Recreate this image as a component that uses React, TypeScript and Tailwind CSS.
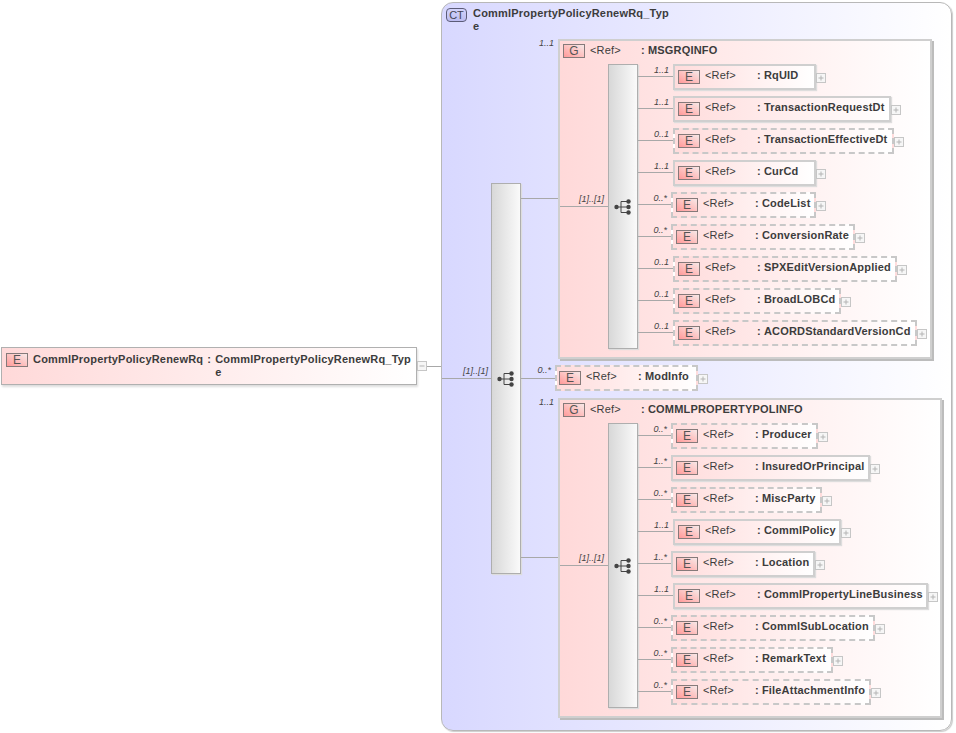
import React from "react";

type Child = {
  label: string;
  card: string;
  width: string;
  dashed?: boolean;
};

const msgRqInfo: Child[] = [
  { label: "RqUID", card: "1..1", width: "w-[143px]" },
  { label: "TransactionRequestDt", card: "1..1", width: "w-[218px]" },
  { label: "TransactionEffectiveDt", card: "0..1", width: "w-[221px]", dashed: true },
  { label: "CurCd", card: "1..1", width: "w-[143px]" },
  { label: "CodeList", card: "0..*", width: "w-[145px]", dashed: true },
  { label: "ConversionRate", card: "0..*", width: "w-[184px]", dashed: true },
  { label: "SPXEditVersionApplied", card: "0..1", width: "w-[224px]", dashed: true },
  { label: "BroadLOBCd", card: "0..1", width: "w-[168px]", dashed: true },
  { label: "ACORDStandardVersionCd", card: "0..1", width: "w-[244px]", dashed: true },
];

const commlPropertyPolInfo: Child[] = [
  { label: "Producer", card: "0..*", width: "w-[147px]", dashed: true },
  { label: "InsuredOrPrincipal", card: "1..*", width: "w-[199px]" },
  { label: "MiscParty", card: "0..*", width: "w-[151px]", dashed: true },
  { label: "CommlPolicy", card: "1..1", width: "w-[168px]" },
  { label: "Location", card: "1..*", width: "w-[144px]" },
  { label: "CommlPropertyLineBusiness", card: "1..1", width: "w-[255px]" },
  { label: "CommlSubLocation", card: "0..*", width: "w-[204px]", dashed: true },
  { label: "RemarkText", card: "0..*", width: "w-[162px]", dashed: true },
  { label: "FileAttachmentInfo", card: "0..*", width: "w-[200px]", dashed: true },
];

const Badge = ({ text, className = "" }: { text: string; className?: string }) => (
  <span
    className={`flex h-[14px] w-[22px] shrink-0 items-center justify-center border border-[#857a7a] bg-linear-to-tr from-[#ff9a9a] to-[#f6e8e8] text-[12px] leading-none font-normal tracking-normal text-[#555] ${className}`}
  >
    {text}
  </span>
);

// expand / collapse toggle at the right of a node
const Toggle = ({ open = false, className = "" }: { open?: boolean; className?: string }) => (
  <svg className={`shrink-0 ${className}`} width="10" height="10" viewBox="0 0 10 10">
    <rect x="0.5" y="0.5" width="9" height="9" fill="#f6f6f6" stroke="#c6c6c6" />
    <path d={open ? "M2.5 5h5" : "M2.5 5h5M5 2.5v5"} stroke="#b4b4b4" fill="none" />
  </svg>
);

// line going into a node, with the cardinality sitting above it
const Connector = ({
  card,
  className,
  labelClass = "top-[2px] right-[4px]",
}: {
  card?: string;
  className: string;
  labelClass?: string;
}) => (
  <div className={`relative flex shrink-0 items-center ${className}`}>
    <div className="h-px w-full bg-[#a8a8a8]" />
    {card && (
      <span className={`absolute text-[9px] leading-none whitespace-nowrap text-[#444] italic ${labelClass}`}>
        {card}
      </span>
    )}
  </div>
);

// grey sequence bar with its symbol in the middle
const SequenceBar = ({ className }: { className: string }) => (
  <div
    className={`flex w-[30px] shrink-0 items-center justify-center border border-[#aeaeae] bg-linear-to-r from-[#d8d8d8] to-[#fafafa] shadow-[1px_1px_1px_#ddd] ${className}`}
  >
    <svg width="18" height="18" viewBox="0 0 18 18" fill="#444">
      <path d="M2 9h5M7 3.5h8M7 9h8M7 14.5h8M7 3.5v11" fill="none" stroke="#444" />
      <circle cx="2.5" cy="9" r="2.2" />
      <circle cx="14.5" cy="3.5" r="2.2" />
      <circle cx="14.5" cy="9" r="2.2" />
      <circle cx="14.5" cy="14.5" r="2.2" />
    </svg>
  </div>
);

const NodeBody = ({ child, badgeClass = "ml-[3px]" }: { child: Child; badgeClass?: string }) => (
  <>
    <div
      className={`flex h-[26px] items-start border-2 bg-linear-to-r from-[#ffdcdc] to-white text-[11px] leading-none tracking-[0.2px] text-[#3c3c3c] ${child.width} ${
        child.dashed
          ? "border-dashed border-[#c8c8c8]"
          : "border-[#cfcfcf] shadow-[1px_1px_1px_#ddd]"
      }`}
    >
      <Badge text="E" className={`mt-[4px] ${badgeClass}`} />
      <span className="mt-[4px] ml-[5px] w-[52px] shrink-0">&lt;Ref&gt;</span>
      <span className="mt-[4px] font-bold whitespace-nowrap">
        :<span className="ml-[3px]">{child.label}</span>
      </span>
    </div>
    <Toggle className="mt-[9px]" />
  </>
);

const Group = ({
  name,
  card,
  items,
  width,
}: {
  name: string;
  card: string;
  items: Child[];
  width: string;
}) => (
  <div className="flex items-start">
    <Connector card={card} className="h-[320px] w-[37px] pb-[2px]" labelClass="top-0 right-[4px]" />
    <div
      className={`h-[320px] border-2 border-[#cfcfcf] bg-linear-to-r from-[#ffd9d9] to-white text-[#3c3c3c] shadow-[2px_2px_0_#bcbcbc] ${width}`}
    >
      <div className="flex h-[23px] items-start pt-[3px] text-[11px] leading-none tracking-[0.2px]">
        <Badge text="G" className="ml-[3px]" />
        <span className="mt-[1px] ml-[5px] w-[51px]">&lt;Ref&gt;</span>
        <span className="mt-[1px] font-bold whitespace-nowrap">
          :<span className="ml-[3px]">{name}</span>
        </span>
      </div>
      <div className="flex items-start">
        <Connector card="[1]..[1]" className="h-[285px] w-[48px]" labelClass="top-[131px] right-[4px]" />
        <SequenceBar className="h-[285px]" />
        <div className="flex flex-col gap-[6px]">
          {items.map((item) => (
            <div key={item.label} className="flex items-start">
              <Connector
                card={item.card}
                className={`h-[26px] pb-[2px] ${item.card.endsWith("*") ? "w-[33px]" : "w-[35px]"}`}
              />
              <NodeBody child={item} />
            </div>
          ))}
        </div>
      </div>
    </div>
  </div>
);

export default function App() {
  return (
    <div className="flex h-[733px] w-[956px] items-start overflow-hidden bg-white pl-px font-['Liberation_Sans',Arial,sans-serif]">
      {/* root element */}
      <div className="mt-[347px] flex h-[38px] w-[416px] shrink-0 items-start border border-[#b0b0b0] bg-linear-to-r from-[#ffd9d9] to-white text-[11px] leading-[13px] font-bold tracking-[0.2px] text-[#3c3c3c] shadow-[1px_2px_2px_#ddd]">
        <Badge text="E" className="mt-[5px] ml-[4px]" />
        <span className="mt-[5px] ml-[5px] shrink-0">CommlPropertyPolicyRenewRq</span>
        <span className="mt-[5px] ml-[4px] shrink-0">:</span>
        <span className="mt-[5px] ml-[4px] shrink-0">
          CommlPropertyPolicyRenewRq_Typ
          <br />e
        </span>
      </div>
      <div className="mt-[361px] flex w-[24px] shrink-0 items-center">
        <Toggle open />
        <div className="h-px flex-1 bg-[#a8a8a8]" />
      </div>

      {/* complex type panel */}
      <div className="mt-[2px] h-[729px] w-[511px] shrink-0 rounded-[12px] border border-[#b8b8b8] bg-linear-to-r from-[#d8d8ff] to-white shadow-[1px_1px_1px_#ccc]">
        <div className="flex h-[36px] items-start pt-[5px] pl-[4px]">
          <span className="flex h-[14px] w-[21px] items-center justify-center rounded-[4px] border border-[#5c5c78] bg-linear-to-b from-[#d4d4fc] to-[#bcbcf0] text-[11px] leading-none text-[#445]">
            CT
          </span>
          <span className="-mt-px ml-[6px] text-[11px] leading-[13px] font-bold tracking-[0.2px] text-[#3c3c3c]">
            CommlPropertyPolicyRenewRq_Typ
            <br />e
          </span>
        </div>

        <div className="flex items-center">
          <Connector card="[1]..[1]" className="w-[49px]" labelClass="-top-[11px] right-[3px]" />
          <SequenceBar className="h-[391px]" />
          <div className="flex flex-col gap-[6px]">
            <Group name="MSGRQINFO" card="1..1" items={msgRqInfo} width="w-[374px]" />
            <div className="flex items-start">
              <Connector card="0..*" className="h-[26px] w-[34px]" labelClass="top-px right-[4px]" />
              <NodeBody child={{ label: "ModInfo", card: "0..*", width: "w-[143px]", dashed: true }} badgeClass="ml-[2px]" />
            </div>
            <div className="mt-px">
              <Group name="COMMLPROPERTYPOLINFO" card="1..1" items={commlPropertyPolInfo} width="w-[384px]" />
            </div>
          </div>
        </div>
      </div>
    </div>
  );
}
